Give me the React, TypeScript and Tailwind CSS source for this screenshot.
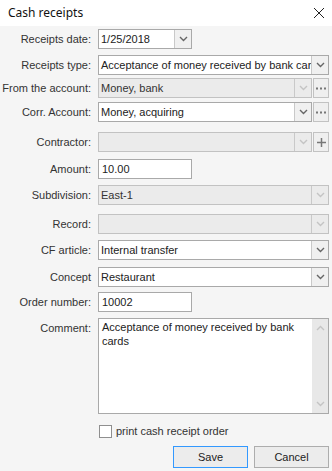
import React from "react";

const FONT = { fontFamily: '"Liberation Sans", Arial, sans-serif' };

function Chevron({ disabled, up }: { disabled?: boolean; up?: boolean }) {
    return (
        <svg width="9" height="6" viewBox="0 0 9 6" className={up ? "rotate-180" : ""}>
            <path d="M1 1 L4.5 4.5 L8 1" fill="none" stroke={disabled ? "#c4c4c4" : "#666"} strokeWidth="1.4" />
        </svg>
    );
}

function Label({ text }: { text: string }) {
    return <div className="w-[92px] shrink-0 text-right pr-[1px] text-[#333] leading-[20px] whitespace-nowrap">{text}</div>;
}

function Combo({ value, disabled, width, extra }: { value?: string; disabled?: boolean; width?: string; extra?: "dots" | "plus" }) {
    return (
        <div className={`flex ml-[6px] min-w-0 ${width ?? "flex-1"}`}>
            <div className={`flex flex-1 min-w-0 h-[20px] border ${disabled ? "border-[#c2c2c2] bg-[#ebebeb]" : "border-[#a9a9a9] bg-white"}`}>
                <div className={`flex-1 min-w-0 px-[2px] leading-[18px] whitespace-nowrap overflow-hidden ${disabled ? "text-[#333]" : "text-[#222]"}`}>{value}</div>
                <div className={`w-[17px] shrink-0 flex items-center justify-center border-l ${disabled ? "border-[#c9c9c9] bg-[#ebebeb]" : "border-[#c9c9c9] bg-[#f0f0f0]"}`}>
                    <Chevron disabled={disabled} />
                </div>
            </div>
            {extra && (
                <div className="w-[16px] shrink-0 h-[20px] ml-[1px] border border-[#c2c2c2] bg-[#efefef] flex items-center justify-center">
                    {extra === "dots" ? (
                        <svg width="10" height="3" viewBox="0 0 10 3">
                            <rect x="0" y="0.5" width="2" height="2" fill="#777" />
                            <rect x="4" y="0.5" width="2" height="2" fill="#777" />
                            <rect x="8" y="0.5" width="2" height="2" fill="#777" />
                        </svg>
                    ) : (
                        <svg width="9" height="9" viewBox="0 0 9 9">
                            <path d="M4.5 0 V9 M0 4.5 H9" stroke="#777" strokeWidth="1.5" />
                        </svg>
                    )}
                </div>
            )}
        </div>
    );
}

function TextBox({ value }: { value: string }) {
    return (
        <div className="ml-[6px] w-[94px] h-[20px] border border-[#a9a9a9] bg-white px-[3px] leading-[18px] text-[#222]">{value}</div>
    );
}

export default function App() {
    return (
        <div className="w-[332px] h-[471px] bg-[#f5f5f5] text-[11px] overflow-hidden" style={FONT}>
            {/* Заголовок окна */}
            <div className="h-[26px] bg-white flex items-center justify-between pl-[8px] pr-[7px]">
                <span className="text-[12px] text-[#111]" style={{ fontFamily: '"Noto Sans", "Open Sans", sans-serif' }}>Cash receipts</span>
                <svg width="12" height="12" viewBox="0 0 12 12">
                    <path d="M1 1 L11 11 M11 1 L1 11" stroke="#222" strokeWidth="1" />
                </svg>
            </div>

            <div className="flex flex-col pr-[3px]">
                <div className="flex mt-[3px]">
                    <Label text="Receipts date:" />
                    <Combo value="1/25/2018" width="w-[94px]" />
                </div>
                <div className="flex mt-[6px]">
                    <Label text="Receipts type:" />
                    <Combo value="Acceptance of money received by bank cards" />
                </div>
                <div className="flex mt-[3px]">
                    <Label text="From the account:" />
                    <Combo value="Money, bank" disabled extra="dots" />
                </div>
                <div className="flex mt-[4px]">
                    <Label text="Corr. Account:" />
                    <Combo value="Money, acquiring" extra="dots" />
                </div>
                <div className="flex mt-[10px]">
                    <Label text="Contractor:" />
                    <Combo disabled extra="plus" />
                </div>
                <div className="flex mt-[7px]">
                    <Label text="Amount:" />
                    <TextBox value="10.00" />
                </div>
                <div className="flex mt-[6px]">
                    <Label text="Subdivision:" />
                    <Combo value="East-1" disabled />
                </div>
                <div className="flex mt-[9px]">
                    <Label text="Record:" />
                    <Combo disabled />
                </div>
                <div className="flex mt-[6px]">
                    <Label text="CF article:" />
                    <Combo value="Internal transfer" />
                </div>
                <div className="flex mt-[7px]">
                    <Label text="Concept" />
                    <Combo value="Restaurant" />
                </div>
                <div className="flex mt-[5px]">
                    <Label text="Order number:" />
                    <TextBox value="10002" />
                </div>
                <div className="flex mt-[6px]">
                    <Label text="Comment:" />
                    <div className="ml-[6px] flex-1 h-[96px] border border-[#a9a9a9] bg-white flex">
                        <div className="flex-1 px-[3px] pt-[1px] leading-[14px] text-[#222]">Acceptance of money received by bank cards</div>
                        <div className="w-[16px] bg-[#e8e8e8] flex flex-col items-center justify-between py-[6px]">
                            <Chevron disabled up />
                            <Chevron disabled />
                        </div>
                    </div>
                </div>

                <div className="flex items-center mt-[11px] ml-[99px] h-[13px] leading-[13px]">
                    <div className="w-[13px] h-[13px] border border-[#8f8f8f] bg-white" />
                    <span className="ml-[4px] text-[#333]">print cash receipt order</span>
                </div>

                <div className="flex justify-end gap-[6px] mt-[8px]">
                    <button className="w-[75px] h-[22px] border border-[#3399ff] bg-[#ececec] text-[#222]">Save</button>
                    <button className="w-[75px] h-[22px] border border-[#adadad] bg-[#ececec] text-[#222]">Cancel</button>
                </div>
            </div>
        </div>
    );
}
